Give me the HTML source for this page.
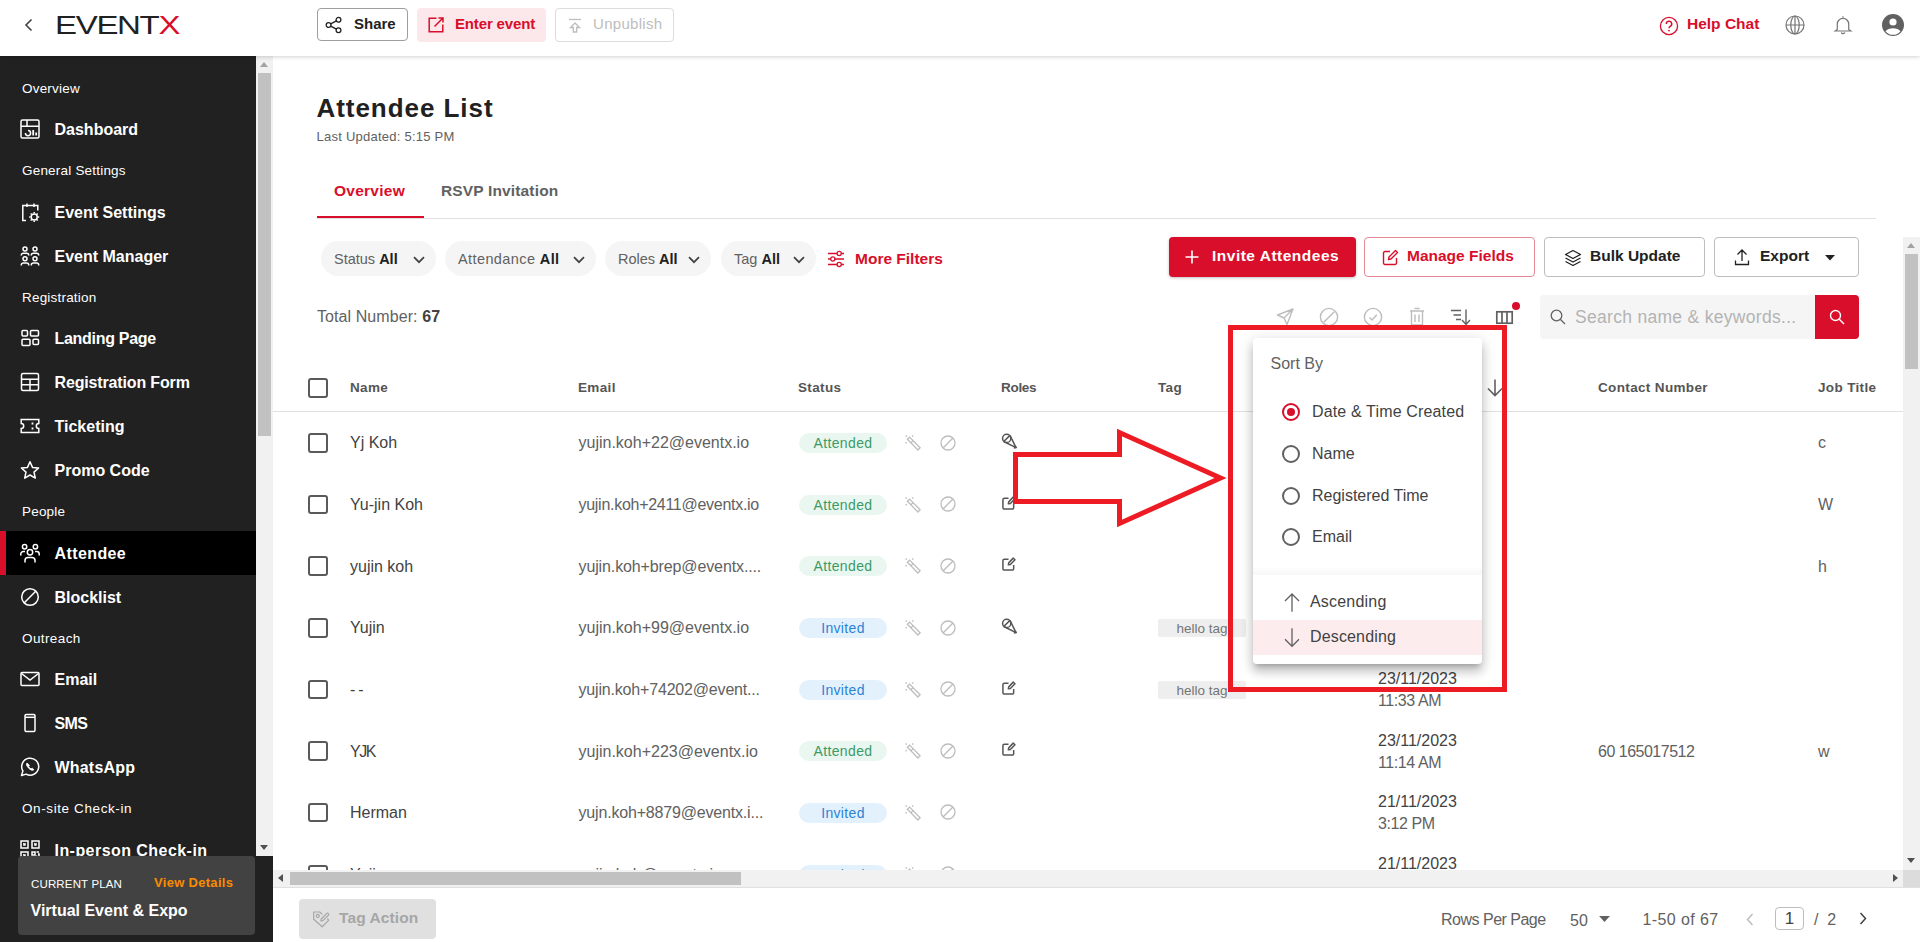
<!DOCTYPE html>
<html lang="en">
<head>
<meta charset="utf-8">
<title>Attendee List</title>
<style>
*{box-sizing:border-box;margin:0;padding:0}
html,body{width:1920px;height:942px;overflow:hidden;background:#fff}
body{position:relative;font-family:"Liberation Sans",sans-serif;color:#424242;font-size:16px}
.a{position:absolute;white-space:nowrap}
svg{display:block;overflow:visible}
/* header */
#hdr{left:0;top:0;width:1920px;height:56px;background:#fff;box-shadow:0 1px 4px rgba(0,0,0,.18);z-index:5}
.btn{height:33px;border-radius:4px;font-weight:700;font-size:15px;line-height:29px}
/* sidebar */
#side{left:0;top:56px;width:256px;height:886px;background:#212121;overflow:hidden}
.sl{left:22px;color:#fff;font-size:13.5px;letter-spacing:.2px;height:20px;line-height:20px}
.si{left:0;width:256px;height:44px}
.si b{position:absolute;left:54.500px;top:.5px;line-height:44px;color:#fff;font-size:16px;font-weight:700}
.si svg{position:absolute;left:20px;top:12px;width:20px;height:20px;fill:none;stroke:#fff;stroke-width:1.5}
.si.on{background:#000;border-left:6px solid #d80e2a}
.si.on b{left:48.500px}
.si.on svg{left:14px}
/* scrollbars */
.sb{background:#f1f1f1}
.th{background:#c1c1c1}
/* main */
.pill{height:35px;border-radius:18px;background:#f5f5f5;font-size:14.5px;line-height:37px;color:#616161;padding-left:13px}
.pill b{color:#212121}
.hd{font-weight:700;font-size:13.5px;letter-spacing:.35px;color:#555;height:20px;line-height:20px}
.cb{left:308px;width:19.5px;height:19.5px;border:2px solid #5a5a5a;border-radius:3px;background:#fff}
.nm{left:350px;color:#424242;font-size:16px;height:22px;line-height:22px}
.em{left:578.500px;color:#616161;font-size:16px;height:22px;line-height:22px}
.st{left:799px;width:88px;height:20px;border-radius:10px;font-size:14px;letter-spacing:.35px;line-height:20px;text-align:center}
.st.at{background:#eaf7f0;color:#3c9a66}
.st.in{background:#e3f1fd;color:#2b83d6}
.dt{left:1378px;font-size:16px;height:22px;line-height:23px;color:#424242}
.tm{left:1378px;letter-spacing:-.4px;font-size:16px;height:22px;line-height:23px;color:#616161}
.tag{left:1158px;width:88px;height:18px;background:#eeeeee;border-radius:2px;font-size:13.5px;line-height:20px;color:#757575;text-align:center}
.pg{height:24px;line-height:24px;font-size:16px;color:#616161}
.rd{left:29px;width:18px;height:18px;border:2px solid #616161;border-radius:50%}
.rd.on{border-color:#d80e2a}
.rd.on::after{content:"";position:absolute;left:3px;top:3px;width:8px;height:8px;border-radius:50%;background:#d80e2a}
.rl{left:59px;height:24px;line-height:24px;font-size:16px;color:#424242}
</style>
</head>
<body>
<!-- MAIN -->
<!--M1-->
<div class="a" id="ttl" style="left:316.500px;top:90px;height:36px;line-height:36px;font-size:26px;font-weight:700;color:#212121;letter-spacing:.95px">Attendee List</div>
<div class="a" id="upd" style="left:316.500px;top:128px;height:18px;line-height:18px;font-size:13px;letter-spacing:.24px;color:#616161">Last Updated: 5:15 PM</div>
<div class="a" style="left:317px;top:218px;width:1559px;height:1px;background:#e0e0e0"></div>
<div class="a" style="left:317px;top:216px;width:107px;height:2px;background:#d80e2a"></div>
<div class="a" id="tab1" style="left:334px;top:180px;height:22px;line-height:22px;font-size:15.500px;letter-spacing:.25px;font-weight:700;color:#d80e2a">Overview</div>
<div class="a" id="tab2" style="left:441px;top:180px;letter-spacing:.15px;height:22px;line-height:22px;font-size:15.500px;font-weight:700;color:#616161">RSVP Invitation</div>
<div class="a pill" style="left:321px;top:241px;width:115px">Status <b>All</b><svg class="a" style="right:11px;top:14.5px" width="12" height="8" viewBox="0 0 12 8"><path d="M1 1.200 L6 6.200 L11 1.200" fill="none" stroke="#424242" stroke-width="1.700"/></svg></div>
<div class="a pill" style="left:445px;top:241px;width:151px;letter-spacing:.4px">Attendance <b>All</b><svg class="a" style="right:11px;top:14.5px" width="12" height="8" viewBox="0 0 12 8"><path d="M1 1.200 L6 6.200 L11 1.200" fill="none" stroke="#424242" stroke-width="1.700"/></svg></div>
<div class="a pill" style="left:605px;top:241px;width:106px">Roles <b>All</b><svg class="a" style="right:11px;top:14.5px" width="12" height="8" viewBox="0 0 12 8"><path d="M1 1.200 L6 6.200 L11 1.200" fill="none" stroke="#424242" stroke-width="1.700"/></svg></div>
<div class="a pill" style="left:721px;top:241px;width:95px">Tag <b>All</b><svg class="a" style="right:11px;top:14.5px" width="12" height="8" viewBox="0 0 12 8"><path d="M1 1.200 L6 6.200 L11 1.200" fill="none" stroke="#424242" stroke-width="1.700"/></svg></div>
<svg class="a" style="left:827px;top:250px" width="18" height="18" viewBox="0 0 18 18" fill="none" stroke="#d80e2a" stroke-width="1.300"><path d="M1 3.500 H10 M14.500 3.500 H17 M1 9 H3.500 M8 9 H17 M1 14.500 H10 M14.500 14.500 H17"/><circle cx="12.200" cy="3.500" r="2.100"/><circle cx="5.800" cy="9" r="2.100"/><circle cx="12.200" cy="14.500" r="2.100"/></svg>
<div class="a" id="mf" style="left:855px;top:247px;height:24px;line-height:24px;font-size:15.500px;font-weight:700;color:#d80e2a">More Filters</div>
<div class="a" style="left:1169px;top:237px;width:187px;height:40px;background:#d80e2a;border-radius:4px;box-shadow:0 1px 3px rgba(0,0,0,.25)"><svg class="a" style="left:16px;top:13px" width="14" height="14" viewBox="0 0 14 14"><path d="M7 .5 V13.500 M.5 7 H13.500" stroke="#fff" stroke-width="1.600"/></svg><div class="a" id="inv" style="left:43px;top:7px;height:24px;line-height:24px;font-size:15.500px;letter-spacing:.5px;font-weight:700;color:#fff">Invite Attendees</div></div>
<div class="a" style="left:1364px;top:237px;width:171px;height:40px;border:1px solid #e58a96;border-radius:4px"><svg class="a" style="left:17px;top:11px" width="17" height="17" viewBox="0 0 17 17" fill="none" stroke="#d80e2a" stroke-width="1.400"><path d="M8 2.500 H3 a1.500 1.500 0 0 0 -1.500 1.500 V14 a1.500 1.500 0 0 0 1.500 1.500 H13 a1.500 1.500 0 0 0 1.500-1.500 V9"/><path d="M6.500 10.500 L7 8 L13.500 1.500 L15.500 3.500 L9 10 Z" stroke-linejoin="round"/></svg><div class="a" id="mfd" style="left:42px;top:6px;height:24px;line-height:24px;font-size:15.500px;font-weight:700;color:#d80e2a">Manage Fields</div></div>
<div class="a" style="left:1544px;top:237px;width:161px;height:40px;border:1px solid #bdbdbd;border-radius:4px"><svg class="a" style="left:19px;top:11px" width="18" height="18" viewBox="0 0 18 18" fill="none" stroke="#212121" stroke-width="1.300" stroke-linejoin="round"><path d="M9 1.500 L16.500 5.500 L9 9.500 L1.500 5.500 Z M1.500 9 L9 13 L16.500 9 M1.500 12.500 L9 16.500 L16.500 12.500"/></svg><div class="a" id="bu" style="left:45px;top:6px;height:24px;line-height:24px;font-size:15.500px;font-weight:700;color:#212121">Bulk Update</div></div>
<div class="a" style="left:1714px;top:237px;width:145px;height:40px;border:1px solid #bdbdbd;border-radius:4px"><svg class="a" style="left:19px;top:11px" width="16" height="17" viewBox="0 0 16 17" fill="none" stroke="#212121" stroke-width="1.300"><path d="M8 12 V1.500 M3.500 5.500 L8 1 L12.500 5.500 M1.500 11.500 V15.500 H14.500 V11.500"/></svg><div class="a" id="ex" style="left:45px;top:6px;height:24px;line-height:24px;font-size:15.500px;font-weight:700;color:#212121">Export</div><svg class="a" style="left:110px;top:17px" width="10" height="6" viewBox="0 0 10 6"><path d="M0 0 H10 L5 5.500 Z" fill="#212121"/></svg></div>
<div class="a" id="tot" style="left:317px;top:305.500px;height:22px;line-height:22px;font-size:16px;letter-spacing:.08px;color:#616161">Total Number: <b style="color:#424242">67</b></div>
<svg class="a" style="left:1276px;top:308px" width="18" height="18" viewBox="0 0 18 18" fill="none" stroke="#bdbdbd" stroke-width="1.400" stroke-linejoin="round"><path d="M17 1 L1.500 7 L8 10 L11 16.500 Z M8 10 L17 1"/></svg>
<svg class="a" style="left:1320px;top:308px" width="18" height="18" viewBox="0 0 18 18" fill="none" stroke="#bdbdbd" stroke-width="1.400"><circle cx="9" cy="9" r="8.600"/><path d="M3.700 14.300 L14.300 3.700"/></svg>
<svg class="a" style="left:1364px;top:308px" width="18" height="18" viewBox="0 0 18 18" fill="none" stroke="#bdbdbd" stroke-width="1.400"><circle cx="9" cy="9" r="8.600"/><path d="M5.500 9.500 L8 12 L12.800 6.800"/></svg>
<svg class="a" style="left:1409px;top:307px" width="16" height="19" viewBox="0 0 16 19" fill="none" stroke="#bdbdbd" stroke-width="1.400"><path d="M1 4 H15 M5.500 1.500 H10.500 M2.500 4 V18 H13.500 V4 M6 7.500 V15 M10 7.500 V15"/></svg>
<svg class="a" style="left:1451px;top:308px" width="20" height="18" viewBox="0 0 20 18" fill="none" stroke="#616161" stroke-width="1.400"><path d="M0 2.500 H10 M2.500 7 H10 M5 11.500 H10 M15 1.500 V16 M11 12 L15 16.500 L19 12"/></svg>
<svg class="a" style="left:1496px;top:310.500px" width="17" height="13" viewBox="0 0 17 13" fill="none" stroke="#616161" stroke-width="1.700"><rect x=".8" y=".8" width="15.400" height="11.400"/><path d="M6 .8 V12.200 M11 .8 V12.200"/></svg>
<div class="a" style="left:1511.500px;top:301.500px;width:8.500px;height:8.500px;border-radius:50%;background:#d80e2a"></div>
<div class="a" style="left:1540px;top:295px;width:275px;height:44px;background:#f5f5f5;border-radius:4px 0 0 4px"><svg class="a" style="left:10px;top:14px" width="16" height="16" viewBox="0 0 16 16" fill="none" stroke="#616161" stroke-width="1.300"><circle cx="6.500" cy="6.500" r="5.300"/><path d="M10.500 10.500 L15 15"/></svg><div class="a" id="srch" style="left:35px;top:10px;height:24px;line-height:24px;font-size:17.500px;letter-spacing:.3px;color:#b3b3b3">Search name &amp; keywords...</div></div>
<div class="a" style="left:1815px;top:295px;width:44px;height:44px;background:#d80e2a;border-radius:0 4px 4px 0"><svg class="a" style="left:14px;top:14px" width="16" height="16" viewBox="0 0 16 16" fill="none" stroke="#fff" stroke-width="1.400"><circle cx="6.500" cy="6.500" r="5"/><path d="M10.300 10.300 L15 15"/></svg></div>
<!--T1-->
<div class="a cb" style="top:378px"></div>
<div class="a hd" style="left:350px;top:378px">Name</div>
<div class="a hd" style="left:578px;top:378px">Email</div>
<div class="a hd" style="left:798px;top:378px">Status</div>
<div class="a hd" style="left:1001px;top:378px;letter-spacing:-.3px">Roles</div>
<div class="a hd" style="left:1158px;top:378px">Tag</div>
<div class="a hd" style="left:1378px;top:368px;width:100px;white-space:normal;line-height:19px;height:38px">Date &amp; Time Created</div>
<div class="a hd" style="left:1598px;top:378px">Contact Number</div>
<div class="a hd" style="left:1818px;top:378px">Job Title</div>
<svg class="a" style="left:1487px;top:379px" width="16" height="18" viewBox="0 0 16 18" fill="none" stroke="#616161" stroke-width="1.600"><path d="M8 .5 V16 M1 9.500 L8 16.500 L15 9.500"/></svg>
<div class="a" style="left:273px;top:411px;width:1630px;height:1px;background:#e0e0e0"></div>
<div class="a cb" style="top:433.0px"></div>
<div class="a nm" style="top:432px">Yj Koh</div>
<div class="a em" style="top:432px">yujin.koh+22@eventx.io</div>
<div class="a st at" style="top:433.0px">Attended</div>
<svg class="a" style="left:904px;top:434.0px" width="17" height="17" viewBox="0 0 17 17" fill="none" stroke="#bdbdbd" stroke-width="1.300"><path d="M3.400 5.300 L5.600 3.100 L16.100 13.800 L13.900 16 Z M6.900 8.800 L9.100 6.600"/><path d="M1.600 2 H2.900 M8.100 2 H9.400 M1.600 8.700 H2.900 M2.200 1.400 V2.700 M8.700 1.400 V2.700 M2.200 8 V9.400" stroke-width="1"/></svg>
<svg class="a" style="left:939.5px;top:434.5px" width="16" height="16" viewBox="0 0 16 16" fill="none" stroke="#bdbdbd" stroke-width="1.300"><circle cx="8" cy="8" r="7"/><path d="M3.300 12.700 L12.700 3.300"/></svg>
<svg class="a" style="left:1002px;top:432.5px" width="16" height="16" viewBox="0 0 16 16" fill="none" stroke="#555" stroke-width="1.500" stroke-linejoin="round"><circle cx="4.700" cy="5.400" r="4.100"/><path d="M1.700 8.500 L14 14.600 L8 2.400 M1.700 8.500 L8 2.400 M11.800 14.900 L14.900 14.200"/></svg>
<div class="a em" style="left:1818px;top:432px">c</div>
<div class="a cb" style="top:494.6px"></div>
<div class="a nm" style="top:494px">Yu-jin Koh</div>
<div class="a em" style="top:494px;letter-spacing:-.28px">yujin.koh+2411@eventx.io</div>
<div class="a st at" style="top:494.6px">Attended</div>
<svg class="a" style="left:904px;top:495.6px" width="17" height="17" viewBox="0 0 17 17" fill="none" stroke="#bdbdbd" stroke-width="1.300"><path d="M3.400 5.300 L5.600 3.100 L16.100 13.800 L13.900 16 Z M6.900 8.800 L9.100 6.600"/><path d="M1.600 2 H2.900 M8.100 2 H9.400 M1.600 8.700 H2.900 M2.200 1.400 V2.700 M8.700 1.400 V2.700 M2.200 8 V9.400" stroke-width="1"/></svg>
<svg class="a" style="left:939.5px;top:496.1px" width="16" height="16" viewBox="0 0 16 16" fill="none" stroke="#bdbdbd" stroke-width="1.300"><circle cx="8" cy="8" r="7"/><path d="M3.300 12.700 L12.700 3.300"/></svg>
<svg class="a" style="left:1002px;top:495.6px" width="14" height="14" viewBox="0 0 15 15" fill="none" stroke="#555" stroke-width="1.600" stroke-linejoin="round"><path d="M7 2.500 H2.500 a1.500 1.500 0 0 0 -1.500 1.500 V12.500 a1.500 1.500 0 0 0 1.500 1.500 H11 a1.500 1.500 0 0 0 1.500-1.500 V8.500"/><path d="M6.800 8.400 L7.200 6.300 L12 1.200 L13.900 3 L9 8 Z"/></svg>
<div class="a em" style="left:1818px;top:494px">W</div>
<div class="a cb" style="top:556.3px"></div>
<div class="a nm" style="top:556px">yujin koh</div>
<div class="a em" style="top:556px;letter-spacing:-.12px">yujin.koh+brep@eventx....</div>
<div class="a st at" style="top:556.3px">Attended</div>
<svg class="a" style="left:904px;top:557.3px" width="17" height="17" viewBox="0 0 17 17" fill="none" stroke="#bdbdbd" stroke-width="1.300"><path d="M3.400 5.300 L5.600 3.100 L16.100 13.800 L13.900 16 Z M6.900 8.800 L9.100 6.600"/><path d="M1.600 2 H2.900 M8.100 2 H9.400 M1.600 8.700 H2.900 M2.200 1.400 V2.700 M8.700 1.400 V2.700 M2.200 8 V9.400" stroke-width="1"/></svg>
<svg class="a" style="left:939.5px;top:557.8px" width="16" height="16" viewBox="0 0 16 16" fill="none" stroke="#bdbdbd" stroke-width="1.300"><circle cx="8" cy="8" r="7"/><path d="M3.300 12.700 L12.700 3.300"/></svg>
<svg class="a" style="left:1002px;top:557.3px" width="14" height="14" viewBox="0 0 15 15" fill="none" stroke="#555" stroke-width="1.600" stroke-linejoin="round"><path d="M7 2.500 H2.500 a1.500 1.500 0 0 0 -1.500 1.500 V12.500 a1.500 1.500 0 0 0 1.500 1.500 H11 a1.500 1.500 0 0 0 1.500-1.500 V8.500"/><path d="M6.800 8.400 L7.200 6.300 L12 1.200 L13.900 3 L9 8 Z"/></svg>
<div class="a em" style="left:1818px;top:556px">h</div>
<div class="a cb" style="top:618.0px"></div>
<div class="a nm" style="top:617px">Yujin</div>
<div class="a em" style="top:617px">yujin.koh+99@eventx.io</div>
<div class="a st in" style="top:618.0px">Invited</div>
<svg class="a" style="left:904px;top:619.0px" width="17" height="17" viewBox="0 0 17 17" fill="none" stroke="#bdbdbd" stroke-width="1.300"><path d="M3.400 5.300 L5.600 3.100 L16.100 13.800 L13.900 16 Z M6.900 8.800 L9.100 6.600"/><path d="M1.600 2 H2.900 M8.100 2 H9.400 M1.600 8.700 H2.900 M2.200 1.400 V2.700 M8.700 1.400 V2.700 M2.200 8 V9.400" stroke-width="1"/></svg>
<svg class="a" style="left:939.5px;top:619.5px" width="16" height="16" viewBox="0 0 16 16" fill="none" stroke="#bdbdbd" stroke-width="1.300"><circle cx="8" cy="8" r="7"/><path d="M3.300 12.700 L12.700 3.300"/></svg>
<svg class="a" style="left:1002px;top:617.5px" width="16" height="16" viewBox="0 0 16 16" fill="none" stroke="#555" stroke-width="1.500" stroke-linejoin="round"><circle cx="4.700" cy="5.400" r="4.100"/><path d="M1.700 8.500 L14 14.600 L8 2.400 M1.700 8.500 L8 2.400 M11.800 14.900 L14.900 14.200"/></svg>
<div class="a tag" style="top:619.0px">hello tag</div>
<div class="a cb" style="top:679.6px"></div>
<div class="a nm" style="top:679px;letter-spacing:3px">--</div>
<div class="a em" style="top:679px;letter-spacing:-.18px">yujin.koh+74202@event...</div>
<div class="a st in" style="top:679.6px">Invited</div>
<svg class="a" style="left:904px;top:680.6px" width="17" height="17" viewBox="0 0 17 17" fill="none" stroke="#bdbdbd" stroke-width="1.300"><path d="M3.400 5.300 L5.600 3.100 L16.100 13.800 L13.900 16 Z M6.900 8.800 L9.100 6.600"/><path d="M1.600 2 H2.900 M8.100 2 H9.400 M1.600 8.700 H2.900 M2.200 1.400 V2.700 M8.700 1.400 V2.700 M2.200 8 V9.400" stroke-width="1"/></svg>
<svg class="a" style="left:939.5px;top:681.1px" width="16" height="16" viewBox="0 0 16 16" fill="none" stroke="#bdbdbd" stroke-width="1.300"><circle cx="8" cy="8" r="7"/><path d="M3.300 12.700 L12.700 3.300"/></svg>
<svg class="a" style="left:1002px;top:680.6px" width="14" height="14" viewBox="0 0 15 15" fill="none" stroke="#555" stroke-width="1.600" stroke-linejoin="round"><path d="M7 2.500 H2.500 a1.500 1.500 0 0 0 -1.500 1.500 V12.500 a1.500 1.500 0 0 0 1.500 1.500 H11 a1.500 1.500 0 0 0 1.500-1.500 V8.500"/><path d="M6.800 8.400 L7.200 6.300 L12 1.200 L13.900 3 L9 8 Z"/></svg>
<div class="a tag" style="top:680.6px">hello tag</div>
<div class="a dt" style="top:667.1px">23/11/2023</div>
<div class="a tm" style="top:689.1px">11:33 AM</div>
<div class="a cb" style="top:741.2px"></div>
<div class="a nm" style="top:741px;letter-spacing:-1.500px">YJK</div>
<div class="a em" style="top:741px">yujin.koh+223@eventx.io</div>
<div class="a st at" style="top:741.2px">Attended</div>
<svg class="a" style="left:904px;top:742.2px" width="17" height="17" viewBox="0 0 17 17" fill="none" stroke="#bdbdbd" stroke-width="1.300"><path d="M3.400 5.300 L5.600 3.100 L16.100 13.800 L13.900 16 Z M6.900 8.800 L9.100 6.600"/><path d="M1.600 2 H2.900 M8.100 2 H9.400 M1.600 8.700 H2.900 M2.200 1.400 V2.700 M8.700 1.400 V2.700 M2.200 8 V9.400" stroke-width="1"/></svg>
<svg class="a" style="left:939.5px;top:742.8px" width="16" height="16" viewBox="0 0 16 16" fill="none" stroke="#bdbdbd" stroke-width="1.300"><circle cx="8" cy="8" r="7"/><path d="M3.300 12.700 L12.700 3.300"/></svg>
<svg class="a" style="left:1002px;top:742.2px" width="14" height="14" viewBox="0 0 15 15" fill="none" stroke="#555" stroke-width="1.600" stroke-linejoin="round"><path d="M7 2.500 H2.500 a1.500 1.500 0 0 0 -1.500 1.500 V12.500 a1.500 1.500 0 0 0 1.500 1.500 H11 a1.500 1.500 0 0 0 1.500-1.500 V8.500"/><path d="M6.800 8.400 L7.200 6.300 L12 1.200 L13.900 3 L9 8 Z"/></svg>
<div class="a dt" style="top:728.8px">23/11/2023</div>
<div class="a tm" style="top:750.8px">11:14 AM</div>
<div class="a em" style="letter-spacing:-.5px;left:1598px;top:741px">60 165017512</div>
<div class="a em" style="left:1818px;top:741px">w</div>
<div class="a cb" style="top:802.9px"></div>
<div class="a nm" style="top:802px">Herman</div>
<div class="a em" style="top:802px;letter-spacing:-.18px">yujn.koh+8879@eventx.i...</div>
<div class="a st in" style="top:802.9px">Invited</div>
<svg class="a" style="left:904px;top:803.9px" width="17" height="17" viewBox="0 0 17 17" fill="none" stroke="#bdbdbd" stroke-width="1.300"><path d="M3.400 5.300 L5.600 3.100 L16.100 13.800 L13.900 16 Z M6.900 8.800 L9.100 6.600"/><path d="M1.600 2 H2.900 M8.100 2 H9.400 M1.600 8.700 H2.900 M2.200 1.400 V2.700 M8.700 1.400 V2.700 M2.200 8 V9.400" stroke-width="1"/></svg>
<svg class="a" style="left:939.5px;top:804.4px" width="16" height="16" viewBox="0 0 16 16" fill="none" stroke="#bdbdbd" stroke-width="1.300"><circle cx="8" cy="8" r="7"/><path d="M3.300 12.700 L12.700 3.300"/></svg>
<div class="a dt" style="top:790.4px">21/11/2023</div>
<div class="a tm" style="top:812.4px">3:12 PM</div>
<div class="a cb" style="top:864.5px"></div>
<div class="a nm" style="top:864px">Yujin</div>
<div class="a em" style="top:864px">yujin.koh@eventx.io</div>
<div class="a st in" style="top:864.5px">Invited</div>
<svg class="a" style="left:904px;top:865.5px" width="17" height="17" viewBox="0 0 17 17" fill="none" stroke="#bdbdbd" stroke-width="1.300"><path d="M3.400 5.300 L5.600 3.100 L16.100 13.800 L13.900 16 Z M6.900 8.800 L9.100 6.600"/><path d="M1.600 2 H2.900 M8.100 2 H9.400 M1.600 8.700 H2.900 M2.200 1.400 V2.700 M8.700 1.400 V2.700 M2.200 8 V9.400" stroke-width="1"/></svg>
<svg class="a" style="left:939.5px;top:866.0px" width="16" height="16" viewBox="0 0 16 16" fill="none" stroke="#bdbdbd" stroke-width="1.300"><circle cx="8" cy="8" r="7"/><path d="M3.300 12.700 L12.700 3.300"/></svg>
<div class="a dt" style="top:852.0px">21/11/2023</div>
<div class="a tm" style="top:874.0px">3:10 PM</div>
<div class="a sb" style="left:273px;top:870px;width:1647px;height:17px"></div>
<div class="a th" style="left:290px;top:872px;width:451px;height:13px"></div>
<div class="a" style="left:278px;top:874px;width:0;height:0;border:4px solid transparent;border-right:5px solid #505050;border-left:0"></div>
<div class="a" style="left:1892.500px;top:874px;width:0;height:0;border:4.500px solid transparent;border-left:5px solid #505050;border-right:0"></div>
<div class="a sb" style="left:1903px;top:237px;width:17px;height:633px"></div>
<div class="a th" style="left:1905px;top:254px;width:13px;height:115px"></div>
<div class="a" style="left:1907px;top:243px;width:0;height:0;border:4px solid transparent;border-bottom:5px solid #a3a3a3;border-top:0"></div>
<div class="a" style="left:1907px;top:858px;width:0;height:0;border:4px solid transparent;border-top:5px solid #505050;border-bottom:0"></div>
<div class="a" style="left:1903px;top:870px;width:17px;height:17px;background:#dcdcdc"></div>
<div class="a" style="left:273px;top:887px;width:1647px;height:55px;background:#fff;border-top:1px solid #e0e0e0"></div>
<div class="a" style="left:299px;top:899px;width:137px;height:40px;background:#e0e0e0;border-radius:4px"><svg class="a" style="left:13.500px;top:11.500px" width="17" height="17" viewBox="0 0 17 17" fill="none" stroke="#a6a6a6" stroke-width="1.200" stroke-linejoin="round"><path d="M9.300 3.400 L6.700 1 H0.700 V8.250 L9.200 15.750 L15.800 9.100 L14.300 7.700"/><circle cx="4.800" cy="4.900" r="1.500"/><path d="M8.200 8 L13.600 2.600 a1.200 1.200 0 0 1 1.700 1.700 L9.900 9.700 L7.900 10 Z"/></svg><div class="a" id="ta" style="left:40px;top:6.700px;height:24px;line-height:24px;font-size:15.500px;font-weight:700;color:#a6a6a6;letter-spacing:.1px">Tag Action</div></div>
<div class="a pg" id="rpp" style="left:1441px;top:908px;letter-spacing:-.5px">Rows Per Page</div>
<div class="a pg" style="left:1570px;top:908.500px">50</div>
<svg class="a" style="left:1599px;top:916px" width="11" height="6.500" viewBox="0 0 10 6"><path d="M0 0 H10 L5 5.500 Z" fill="#616161"/></svg>
<div class="a pg" id="rng" style="left:1642.500px;top:908px;letter-spacing:.4px">1-50 of 67</div>
<svg class="a" style="left:1745.500px;top:912.500px" width="8" height="13" viewBox="0 0 8 13"><path d="M6.500 1 L1.500 6.500 L6.500 12" fill="none" stroke="#bdbdbd" stroke-width="1.500"/></svg>
<div class="a" style="left:1775px;top:907px;width:29px;height:23px;border:1px solid #bdbdbd;border-radius:4px;text-align:center;line-height:21px;font-size:17px;color:#424242">1</div>
<div class="a pg" style="left:1814px;top:908px">/&nbsp; 2</div>
<svg class="a" style="left:1859px;top:912px" width="8" height="13" viewBox="0 0 8 13"><path d="M1.500 1 L6.500 6.500 L1.500 12" fill="none" stroke="#424242" stroke-width="1.500"/></svg>
<!--P1-->
<div class="a" id="pop" style="left:1253px;top:338px;width:229px;height:326px;background:#fff;border-radius:4px;box-shadow:0 5px 5px -3px rgba(0,0,0,.2),0 8px 10px 1px rgba(0,0,0,.14),0 3px 14px 2px rgba(0,0,0,.12)">
<div class="a" id="sortby" style="left:17.500px;top:14px;height:24px;line-height:24px;font-size:16px;color:#616161">Sort By</div>
<div class="a rd on" style="top:65px"></div><div class="a rl" id="r1" style="top:62px;letter-spacing:.15px">Date &amp; Time Created</div>
<div class="a rd" style="top:107px"></div><div class="a rl" style="top:104px">Name</div>
<div class="a rd" style="top:149px"></div><div class="a rl" id="r3" style="top:146px">Registered Time</div>
<div class="a rd" style="top:190px"></div><div class="a rl" style="top:187px">Email</div>
<div class="a" style="left:0;top:228px;width:229px;height:9px;background:linear-gradient(#fff,#f7f7f7)"></div>
<svg class="a" style="left:31px;top:255px" width="16" height="19" viewBox="0 0 16 19" fill="none" stroke="#616161" stroke-width="1.300"><path d="M8 18.800 V1 M1 8 L8 1 L15 8"/></svg>
<div class="a rl" id="asc" style="left:57px;top:252px;letter-spacing:.2px">Ascending</div>
<div class="a" style="left:0;top:282px;width:229px;height:35px;background:#fdecee"></div>
<svg class="a" style="left:31px;top:290px" width="16" height="19" viewBox="0 0 16 19" fill="none" stroke="#616161" stroke-width="1.300"><path d="M8 .3 V18.300 M1 11.300 L8 18.300 L15 11.300"/></svg>
<div class="a rl" id="desc" style="left:57px;top:287px;letter-spacing:.15px">Descending</div>
</div>
<div class="a" style="left:1228px;top:325px;width:279px;height:367px;border:5px solid #ed1c24"></div>
<svg class="a" style="left:0;top:0" width="1920" height="942" viewBox="0 0 1920 942"><path d="M1015.500 454.500 H1119.500 V432.500 L1220.500 478 L1119.500 523.500 V501.500 H1015.500 Z" fill="none" stroke="#ed1c24" stroke-width="5" stroke-linejoin="miter"/></svg>
<!--P2-->
<!-- SIDEBAR -->
<div class="a" id="side">
<div class="a sl" style="top:23px">Overview</div>
<div class="a sl" style="top:105px">General Settings</div>
<div class="a sl" style="top:232px">Registration</div>
<div class="a sl" style="top:446px">People</div>
<div class="a sl" style="top:573px;letter-spacing:.4px">Outreach</div>
<div class="a sl" style="top:743px;letter-spacing:.6px">On-site Check-in</div>
<div class="a si" style="top:51px"><svg viewBox="0 0 20 20"><rect x="1" y="1" width="18" height="18" rx="1.5"/><path d="M1 7.2 H19 M7 1 V7.2"/><path d="M8 11.5 a2.6 2.6 0 1 1 -2.6 2.6" /><path d="M13.2 16.5 V11 M16.2 16.5 V13.5" stroke-width="1.8"/></svg><b>Dashboard</b></div>
<div class="a si" style="top:134px"><svg viewBox="0 0 20 20"><path d="M6 18.500 H2.800 V3.500 H17.800 V8.500 M7 1.500 V5 M14 1.500 V5"/><circle cx="14.200" cy="15" r="3"/><path d="M14.200 10 V11.500 M14.200 18.500 V20 M9.200 15 H10.700 M17.700 15 H19.200 M10.700 11.500 L11.700 12.500 M16.700 17.500 L17.700 18.500 M17.700 11.500 L16.700 12.500 M11.700 17.500 L10.700 18.500"/></svg><b>Event Settings</b></div>
<div class="a si" style="top:178px"><svg viewBox="0 0 20 20"><circle cx="5" cy="3" r="2"/><circle cx="15" cy="3" r="2"/><circle cx="5" cy="12.800" r="2"/><circle cx="15" cy="12.800" r="2"/><path d="M1.300 9.600 V9.200 a2 2 0 0 1 2-2 H6.700 a2 2 0 0 1 2 2 V9.600 M11.300 9.600 V9.200 a2 2 0 0 1 2-2 H16.700 a2 2 0 0 1 2 2 V9.600 M1.300 19.400 V19 a2 2 0 0 1 2-2 H6.700 a2 2 0 0 1 2 2 V19.400 M11.300 19.400 V19 a2 2 0 0 1 2-2 H16.700 a2 2 0 0 1 2 2 V19.400"/></svg><b>Event Manager</b></div>
<div class="a si" style="top:260px"><svg viewBox="0 0 20 20"><rect x="2" y="2.5" width="5.5" height="5.5" rx="1"/><rect x="10.5" y="2.5" width="8" height="5.5" rx="1"/><rect x="2" y="11.2" width="8" height="6.3" rx="1"/><rect x="13" y="11.2" width="5.5" height="5.2" rx="1"/></svg><b style="letter-spacing:-.3px">Landing Page</b></div>
<div class="a si" style="top:304px"><svg viewBox="0 0 20 20"><rect x="1.5" y="1.5" width="17" height="17" rx="1.5"/><path d="M1.5 7.2 H18.5 M1.5 12.8 H18.5 M10 7.2 V18.5"/></svg><b style="letter-spacing:-.15px">Registration Form</b></div>
<div class="a si" style="top:348px"><svg viewBox="0 0 20 20"><path d="M1.2 3.5 H18.8 V7.5 a2.5 2.5 0 0 0 0 5 V16.5 H1.2 V12.5 a2.5 2.5 0 0 0 0 -5 Z"/><path d="M12.5 6.5 V8.5 M12.5 11.5 V13.5" stroke-width="1.8"/></svg><b>Ticketing</b></div>
<div class="a si" style="top:392px"><svg viewBox="0 0 20 20"><path d="M10 1.8 L12.5 7.4 L18.6 8 L14 12.1 L15.3 18.1 L10 15 L4.7 18.1 L6 12.1 L1.4 8 L7.5 7.4 Z" stroke-linejoin="round"/></svg><b>Promo Code</b></div>
<div class="a si on" style="top:475px"><svg viewBox="0 0 20 20"><circle cx="10" cy="9.3" r="2.7"/><circle cx="4.6" cy="3.7" r="2.2"/><circle cx="15.4" cy="3.7" r="2.2"/><path d="M5 19.5 V17.5 a3 3 0 0 1 3-3 H12 a3 3 0 0 1 3 3 V19.5 M0.8 12.5 V11 a2.5 2.5 0 0 1 2.5-2.5 H5 M19.2 12.5 V11 a2.5 2.5 0 0 0 -2.5-2.5 H15"/></svg><b style="letter-spacing:.4px">Attendee</b></div>
<div class="a si" style="top:519px"><svg viewBox="0 0 20 20"><circle cx="10" cy="10" r="8.3"/><path d="M4.3 15.7 L15.7 4.3"/></svg><b>Blocklist</b></div>
<div class="a si" style="top:601px"><svg viewBox="0 0 20 20"><rect x="1" y="3.5" width="18" height="13" rx="1"/><path d="M1.5 4.5 L10 11 L18.5 4.5"/></svg><b>Email</b></div>
<div class="a si" style="top:645px"><svg viewBox="0 0 20 20"><rect x="5" y="1.5" width="10" height="17" rx="1.2"/><path d="M5 4.3 H15"/></svg><b style="letter-spacing:-.6px">SMS</b></div>
<div class="a si" style="top:689px"><svg viewBox="0 0 20 20"><path d="M1.5 18.5 L2.9 14 a8.5 8.5 0 1 1 3.2 3.1 Z" stroke-linejoin="round"/><path d="M7 6 c-1 1 -.6 2.700 1.400 4.900 s4.200 3 5.500 1.800 l-1.600-1.500 l-1.300 .6 c-.8-.3 -2-1.500 -2.300-2.300 l.7-1.300 Z" fill="#fff" stroke-width=".8"/></svg><b style="letter-spacing:.2px">WhatsApp</b></div>
<div class="a si" style="top:772px"><svg viewBox="0 0 20 20"><rect x="1" y="1" width="7" height="7"/><rect x="12" y="1" width="7" height="7"/><rect x="1" y="12" width="7" height="7"/><rect x="3.6" y="3.600" width="1.800" height="1.800" fill="#fff" stroke-width=".6"/><rect x="14.600" y="3.600" width="1.800" height="1.800" fill="#fff" stroke-width=".6"/><rect x="3.600" y="14.600" width="1.800" height="1.800" fill="#fff" stroke-width=".6"/><path d="M12 12 H15 V15 H12 Z M16.500 12 H19 M12 17.500 H14 V19 M16.500 15.500 V19 H19 M18 14 H19 V16.500"/></svg><b style="letter-spacing:.45px">In-person Check-in</b></div>
<div class="a" style="left:18px;top:800px;width:237px;height:79px;background:#424242;border-radius:4px">
<div class="a" style="left:13px;top:17.500px;height:20px;line-height:20px;font-size:11.5px;letter-spacing:.15px;color:#fff">CURRENT PLAN</div>
<div class="a" style="left:136px;top:17px;height:20px;line-height:20px;font-size:13px;letter-spacing:.3px;font-weight:700;color:#fb8c00">View Details</div>
<div class="a" style="left:12.500px;top:42.500px;height:24px;line-height:24px;font-size:16px;font-weight:700;color:#fff">Virtual Event &amp; Expo</div>
</div>
</div>
<!-- side scrollbar -->
<div class="a sb" style="left:256px;top:56px;width:17px;height:800px"></div>
<div class="a th" style="left:258px;top:73px;width:13px;height:363px"></div>
<div class="a" style="left:256px;top:856px;width:17px;height:86px;background:#212121"></div>
<div class="a" style="left:260px;top:62px;width:0;height:0;border:4px solid transparent;border-bottom:5px solid #a3a3a3;border-top:0"></div>
<div class="a" style="left:260px;top:845px;width:0;height:0;border:4px solid transparent;border-top:5px solid #505050;border-bottom:0"></div>
<!-- HEADER -->
<div class="a" id="hdr">
<svg class="a" style="left:24px;top:18px" width="10" height="14" viewBox="0 0 10 14"><path d="M7.5 1.5 L2 7 L7.5 12.5" fill="none" stroke="#424242" stroke-width="1.6"/></svg>
<div class="a" id="logo" style="left:54.500px;top:9.500px;height:30px;line-height:30px;font-size:25px;color:#212121;letter-spacing:-1px;transform:scaleX(1.32);transform-origin:0 50%">EVENT<span style="color:#d80e2a">X</span></div>
<div class="a btn" style="left:317px;top:8px;width:91px;border:1px solid #9e9e9e;color:#212121;padding-left:36px">Share
<svg class="a" style="left:7px;top:7px" width="18" height="18" viewBox="0 0 18 18" fill="none" stroke="#212121" stroke-width="1.3"><circle cx="13.5" cy="3.8" r="2.4"/><circle cx="3.6" cy="9" r="2.4"/><circle cx="13.5" cy="14.2" r="2.4"/><path d="M5.7 7.9 L11.4 4.9 M5.7 10.1 L11.4 13.1"/></svg></div>
<div class="a btn" style="left:417px;top:8px;width:129px;height:34px;background:#fce8eb;color:#d80e2a;padding-left:38px;line-height:32px;letter-spacing:-.15px">Enter event
<svg class="a" style="left:11px;top:9px" width="16" height="16" viewBox="0 0 16 16" fill="none" stroke="#d80e2a" stroke-width="1.5"><path d="M8.5 1.2 H1.2 V14.8 H14.8 V7.5"/><path d="M10.5 1 H15 V5.5 M15 1 L6.5 9.5"/></svg></div>
<div class="a btn" style="left:555px;top:8px;width:119px;height:34px;border:1px solid #dcdcdc;color:#bdbdbd;padding-left:37px;line-height:30px;font-weight:400;letter-spacing:.3px">Unpublish
<svg class="a" style="left:11px;top:9px" width="16" height="16" viewBox="0 0 16 16" fill="none" stroke="#bdbdbd" stroke-width="1.3"><path d="M2 1.5 H14"/><path d="M8 5 L3.5 9.5 H6.3 V14 H9.7 V9.5 H12.5 Z"/></svg></div>
<svg class="a" style="left:1659px;top:15.500px" width="20" height="20" viewBox="0 0 20 20" fill="none" stroke="#d80e2a" stroke-width="1.3"><circle cx="10" cy="10" r="8.6"/><path d="M7.3 7.9 a2.7 2.7 0 1 1 3.9 2.4 c-.9.5-1.2 1-1.2 1.9" stroke-width="1.5"/><circle cx="10" cy="14.6" r=".9" fill="#d80e2a" stroke="none"/></svg>
<div class="a" style="left:1687px;top:12px;height:24px;line-height:24px;font-size:15.5px;font-weight:700;color:#d80e2a">Help Chat</div>
<svg class="a" style="left:1785px;top:15px" width="20" height="20" viewBox="0 0 20 20" fill="none" stroke="#757575" stroke-width="1.2"><circle cx="10" cy="10" r="9"/><ellipse cx="10" cy="10" rx="4.2" ry="9"/><path d="M1 10 H19 M10 1 V19"/></svg>
<svg class="a" style="left:1833px;top:15px" width="20" height="20" viewBox="0 0 20 20" fill="none" stroke="#757575" stroke-width="1.2"><path d="M10 1.2 V2.5 M4.3 14.5 V9 a5.7 5.7 0 0 1 11.4 0 V14.5 L17.8 16 H2.2 Z M8.3 17.5 a1.8 1.8 0 0 0 3.4 0"/></svg>
<svg class="a" style="left:1882px;top:14.300px" width="22" height="22" viewBox="0 0 22 22"><circle cx="11" cy="11" r="11" fill="#616161"/><circle cx="11" cy="8" r="3.6" fill="#fff"/><path d="M3.5 17.2 a8.5 5.5 0 0 1 15 0 a9.5 9.5 0 0 1 -15 0Z" fill="#fff"/></svg>
</div>
</body>
</html>
